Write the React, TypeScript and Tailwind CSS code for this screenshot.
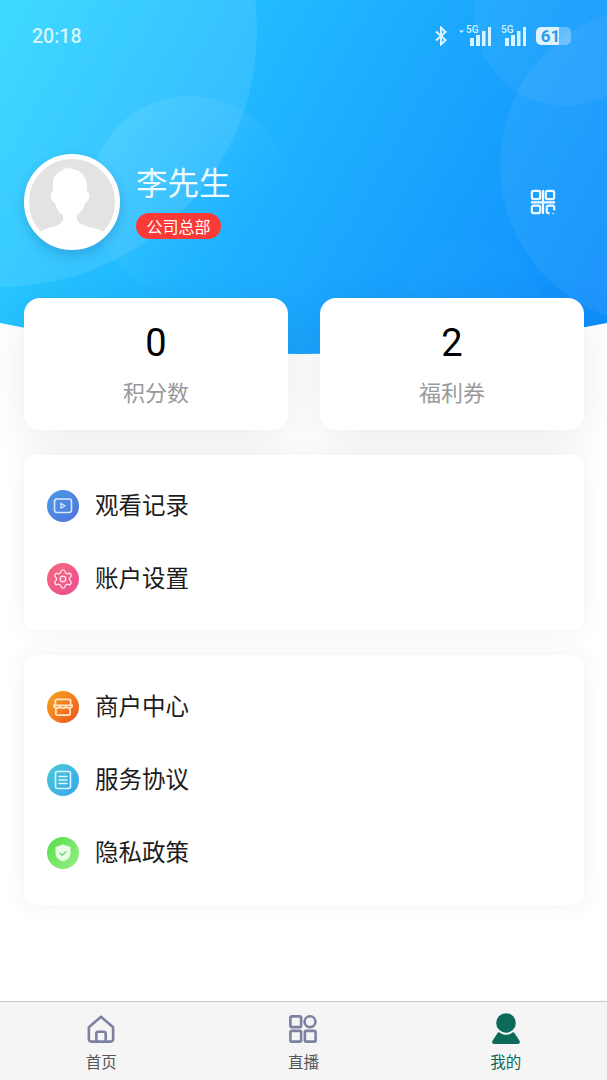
import React from "react";
import { Settings } from "lucide-react";

const cjk = { fontFamily: '"Noto Sans CJK SC", "Noto Sans", sans-serif' };

function HeroBackground() {
  return (
    <svg className="absolute left-0 top-0 w-[607px] h-[360px]" viewBox="0 0 607 360" aria-hidden="true">
      <defs>
        <linearGradient id="hero" x1="0" y1="0" x2="607" y2="340" gradientUnits="userSpaceOnUse">
          <stop offset="0" stopColor="#2cd6ff" />
          <stop offset="0.5" stopColor="#1eaeff" />
          <stop offset="1" stopColor="#0e8cfb" />
        </linearGradient>
        <linearGradient id="fade" x1="0" y1="0" x2="1" y2="1">
          <stop offset="0.1" stopColor="#fff" stopOpacity="0.1" />
          <stop offset="0.7" stopColor="#fff" stopOpacity="0" />
        </linearGradient>
        <clipPath id="heroClip">
          <path d="M0 0H607V323Q303.5 385 0 323Z" />
        </clipPath>
      </defs>
      <g clipPath="url(#heroClip)">
        <rect width="607" height="360" fill="url(#hero)" />
        <circle cx="0" cy="30" r="257" fill="#fff" fillOpacity="0.09" />
        <circle cx="190" cy="196" r="100" fill="url(#fade)" />
        <circle cx="660" cy="165" r="160" fill="#fff" fillOpacity="0.06" />
        <circle cx="566" cy="14" r="92" fill="#fff" fillOpacity="0.05" />
        <circle cx="470" cy="312" r="72" fill="#fff" fillOpacity="0.015" />
      </g>
    </svg>
  );
}

function Signal({ arrow }: { arrow?: boolean }) {
  return (
    <div className="relative w-[30px] h-[22px]">
      <svg className="absolute left-0 top-0 w-[30px] h-[22px] overflow-visible" viewBox="0 0 30 22" fill="#d9f3ff">
        <rect x="9" y="13" width="4" height="8" />
        <rect x="15" y="10" width="4" height="11" />
        <rect x="21" y="6" width="3.500" height="15" />
        <rect x="27" y="2" width="3" height="19" />
        {arrow && <path d="M-2 5.500h5l-2.500 2.500z" />}
      </svg>
      <span
        className="absolute left-[5px] top-[-1px] text-[10px] leading-[12px] font-medium text-[#d9f3ff]"
        style={{ fontFamily: '"Roboto", sans-serif' }}
      >
        5G
      </span>
    </div>
  );
}

function StatusBar() {
  return (
    <div className="relative flex h-[72px] items-center justify-between pl-8 pr-9">
      <span className="translate-y-[1px] text-[19.5px] font-medium text-[#d6f6ff]" style={{ fontFamily: '"Roboto", sans-serif' }}>
        20:18
      </span>
      <div className="flex items-center">
        <svg width="14" height="20" viewBox="0 0 14 20" fill="none" stroke="#d9f3ff" strokeWidth="2" className="mr-[13px]">
          <path d="M2 5.500 11.500 14 7 18.500V1.500L11.500 6 2 14.500" />
        </svg>
        <Signal arrow />
        <div className="w-[5px]" />
        <Signal />
        <div className="ml-[10px] flex h-[18px] w-[35px] overflow-hidden rounded-[5px] bg-[#ffffff]/30">
          <div className="flex h-full w-[23px] items-center justify-center rounded-l-[5px] bg-[#dff3ff]">
            <span
              className="translate-x-[3px] text-[17px] font-bold leading-none text-[#2b9bf0]"
              style={{ fontFamily: '"Roboto", sans-serif' }}
            >
              61
            </span>
          </div>
        </div>
      </div>
    </div>
  );
}

function Avatar() {
  return (
    <div className="h-24 w-24 shrink-0 overflow-hidden rounded-full border-[5px] border-white bg-[#e3e3e3] shadow-[0_5px_12px_rgba(0,60,120,0.22)]">
      <svg width="86" height="86" viewBox="0 0 86 86" fill="#fff">
        <path d="M24 22c1-6 6-10 11-11l-1-3 5 2 2-2 2 2c9 1 15 8 15 17v5c3 1 3 6 1 9-1 2-2 3-3 3-1 5-4 10-8 12v5c3 4 8 6 12 7 5 1 10 2 14 5l4 3v20H6V76l4-3c5-3 10-4 14-5 4-1 8-3 10-7v-5c-4-2-7-7-8-12-1 0-2-1-3-3-2-3-2-8 1-9Z" />
      </svg>
    </div>
  );
}

function QrIcon() {
  return (
    <svg width="26" height="26" viewBox="0 0 28 28" fill="none" stroke="#eefaff" strokeWidth="2.400">
      <rect x="2" y="2" width="9" height="9" rx="2" />
      <rect x="17" y="2" width="9" height="9" rx="2" />
      <rect x="2" y="18" width="9" height="8" rx="2" />
      <path d="M14 1v26M1 14.500h26" />
      <path d="M26 23v-3.500a1.500 1.500 0 0 0-1.500-1.500H20a2 2 0 0 0-2 2v4a2 2 0 0 0 2 2h1M25 26v1" />
    </svg>
  );
}

function StatCard({ value, label }: { value: string; label: string }) {
  return (
    <div className="flex h-[132px] flex-col items-center rounded-[16px] bg-white pt-[19px] shadow-[0_10px_40px_rgba(0,0,0,0.08)]">
      <span className="text-[38px] leading-[52px] text-black" style={{ fontFamily: '"Roboto", sans-serif' }}>
        {value}
      </span>
      <span className="mt-[6px] text-[22px] leading-[32px] text-[#999999]" style={cjk}>
        {label}
      </span>
    </div>
  );
}

function MenuIcon({ kind }: { kind: string }) {
  const stroke = { fill: "none", stroke: "#ffffff", strokeWidth: 1.6, strokeLinejoin: "round" as const, strokeLinecap: "round" as const };
  if (kind === "video")
    return (
      <div className="flex h-8 w-8 items-center justify-center rounded-full bg-gradient-to-br from-[#4a9be8] to-[#4f72d8]">
        <svg width="20" height="20" viewBox="0 0 20 20" {...stroke}>
          <rect x="1.500" y="3" width="17" height="13.500" rx="2.500" stroke="#d9e8ff" />
          <path d="M8 7.200v5l4-2.500z" stroke="#d9e8ff" strokeWidth="1.300" />
        </svg>
      </div>
    );
  if (kind === "gear")
    return (
      <div className="flex h-8 w-8 items-center justify-center rounded-full bg-gradient-to-br from-[#f5697a] to-[#ec4a94]">
        <Settings size={22} color="#ffe3ea" strokeWidth={1.5} />
      </div>
    );
  if (kind === "store")
    return (
      <div className="flex h-8 w-8 items-center justify-center rounded-full bg-gradient-to-br from-[#f5a61f] to-[#ee4f1d]">
        <svg width="24" height="24" viewBox="0 0 22 22" {...stroke} stroke="#ffe6c4">
          <path d="M4 9V5.500A1.500 1.500 0 0 1 5.500 4h11A1.500 1.500 0 0 1 18 5.500V9" />
          <path d="M2.500 9.500h17c0 1.500-1.500 2.500-3 2.500-1.200 0-2-.5-2.700-1.200-.8.8-1.700 1.200-2.800 1.200s-2-.4-2.800-1.200C7.500 11.500 6.700 12 5.500 12c-1.500 0-3-1-3-2.500Z" />
          <path d="M4.500 12.500V17A1.500 1.500 0 0 0 6 18.500h10A1.500 1.500 0 0 0 17.500 17v-4.500" />
        </svg>
      </div>
    );
  if (kind === "doc")
    return (
      <div className="flex h-8 w-8 items-center justify-center rounded-full bg-gradient-to-br from-[#4ccbd2] to-[#38a2f2]">
        <svg width="20" height="20" viewBox="0 0 20 20" {...stroke} stroke="#dff6fb">
          <rect x="2.500" y="1.500" width="15" height="17" rx="2" />
          <path d="M6 6.500h8M6 10h8M6 13.500h8" strokeWidth="1.300" />
        </svg>
      </div>
    );
  return (
    <div className="flex h-8 w-8 items-center justify-center rounded-full bg-gradient-to-br from-[#4fdc48] to-[#97f184]">
      <svg width="20" height="20" viewBox="0 0 20 20">
        <path d="M10 1.500 17.500 4v6c0 4.500-3.500 7.200-7.500 8.500C6 17.200 2.500 14.500 2.500 10V4Z" fill="#eafbe6" />
        <path d="m7 10 2.200 2.200L13 8.700" fill="none" stroke="#7ad886" strokeWidth="1.500" strokeLinecap="round" strokeLinejoin="round" />
      </svg>
    </div>
  );
}

function MenuRow({ kind, label }: { kind: string; label: string }) {
  return (
    <div className="flex h-[73px] items-center gap-4 pl-[23px]">
      <MenuIcon kind={kind} />
      <span className="-translate-y-[1px] text-[23.5px] text-[#1c1c1c]" style={cjk}>
        {label}
      </span>
    </div>
  );
}

function Tab({ label, active, children }: { label: string; active?: boolean; children: React.ReactNode }) {
  return (
    <div className="flex flex-col items-center">
      <div className="flex h-[34px] w-[34px] items-end justify-center">{children}</div>
      <span className={`mt-[5px] text-[15.5px] leading-[24px] ${active ? "text-[#0c6b58]" : "text-[#555555]"}`} style={cjk}>
        {label}
      </span>
    </div>
  );
}

export default function App() {
  return (
    <div className="relative flex h-[1080px] w-[607px] flex-col overflow-hidden bg-white">
      <HeroBackground />
      <StatusBar />
      <div className="relative mt-[82px] flex h-24 items-center pl-6 pr-[23px]">
        <Avatar />
        <div className="ml-[16px] flex flex-1 flex-col items-start pb-[10px]">
          <span className="text-[31.5px] leading-[50px] text-[#effbff]" style={cjk}>
            李先生
          </span>
          <span
            className="mt-[7px] flex h-[26px] w-[85px] items-center justify-center rounded-full bg-[#fb3a38] text-[16px] leading-none text-white"
            style={cjk}
          >
            公司总部
          </span>
        </div>
        <div className="mr-[28px]">
          <QrIcon />
        </div>
      </div>
      <div className="relative mt-12 grid grid-cols-2 gap-8 pl-6 pr-[23px]">
        <StatCard value="0" label="积分数" />
        <StatCard value="2" label="福利券" />
      </div>
      <div className="relative ml-6 mr-[23px] mt-[25px] rounded-[12px] bg-white pb-[15px] pt-[14px] shadow-[0_0_26px_rgba(0,0,0,0.06)]">
        <MenuRow kind="video" label="观看记录" />
        <MenuRow kind="gear" label="账户设置" />
      </div>
      <div className="relative ml-6 mr-[23px] mt-[25px] rounded-[12px] bg-white pb-[16px] pt-[15px] shadow-[0_0_26px_rgba(0,0,0,0.06)]">
        <MenuRow kind="store" label="商户中心" />
        <MenuRow kind="doc" label="服务协议" />
        <MenuRow kind="shield" label="隐私政策" />
      </div>
      <div className="flex-1" />
      <div className="relative grid h-[79px] grid-cols-3 border-t border-[#c9c9c9] bg-[#f5f5f5] pt-[8px]">
        <Tab label="首页">
          <svg width="28" height="28" viewBox="0 0 30 30" fill="none" stroke="#7d81a0" strokeWidth="2.800" strokeLinejoin="round" className="mb-[1px]">
            <path d="M2 13 15 2l13 11v13a2.500 2.500 0 0 1-2.500 2.500H4.500A2.500 2.500 0 0 1 2 26Z" />
            <path d="M10 28V20a2 2 0 0 1 2-2h6a2 2 0 0 1 2 2v8" />
          </svg>
        </Tab>
        <Tab label="直播">
          <svg width="28" height="28" viewBox="0 0 30 30" fill="none" stroke="#7d81a0" strokeWidth="2.800" strokeLinejoin="round" className="mb-[1px]">
            <rect x="1.500" y="1.500" width="11.500" height="11.500" rx="1.500" />
            <circle cx="22.500" cy="7.200" r="5.800" />
            <rect x="1.500" y="17" width="11.500" height="11.500" rx="1.500" />
            <rect x="17" y="17" width="11.500" height="11.500" rx="1.500" />
          </svg>
        </Tab>
        <Tab label="我的" active>
          <svg width="28" height="32" viewBox="0 0 30 33" fill="#0c6b58" className="translate-y-[1px]">
            <circle cx="15" cy="10" r="10.500" />
            <path d="M8.500 20.500c2 1.500 4 2.200 6.500 2.200s4.500-.7 6.500-2.200c1-.7 1.800-.5 2.500.4L29.500 29c1 1.800 0 3.500-2 3.500h-25c-2 0-3-1.700-2-3.500L6 20.900c.7-.9 1.500-1.100 2.500-.4Z" />
          </svg>
        </Tab>
      </div>
    </div>
  );
}
